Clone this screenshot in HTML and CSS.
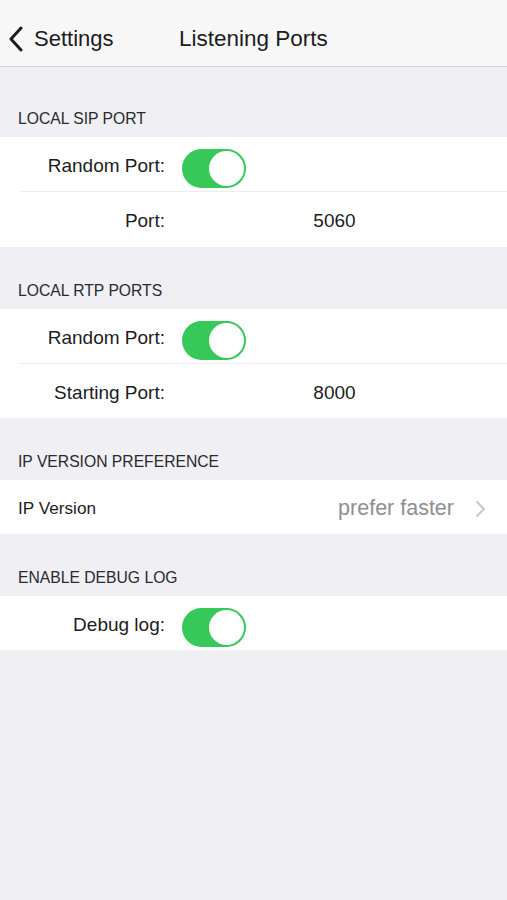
FILE: index.html
```html
<!DOCTYPE html>
<html>
<head>
<meta charset="utf-8">
<link rel="stylesheet" href="styles.css">
</head>
<body>
<header class="navbar">
  <div class="back">
    <svg class="back-icon" width="16" height="26" viewBox="0 0 16 26"><path d="M13 2 L3 13 L13 24" fill="none" stroke="#1c1c1e" stroke-width="3" stroke-linecap="round" stroke-linejoin="round"/></svg>
    <span class="back-label">Settings</span>
  </div>
  <div class="title">Listening Ports</div>
</header>

<main class="content">
  <div class="section-header first">LOCAL SIP PORT</div>
  <div class="card">
    <div class="row">
      <div class="label">Random Port:</div>
      <div class="toggle"><span class="knob"></span></div>
    </div>
    <div class="sep"></div>
    <div class="row tall">
      <div class="label">Port:</div>
      <div class="value">5060</div>
    </div>
  </div>

  <div class="section-header">LOCAL RTP PORTS</div>
  <div class="card">
    <div class="row">
      <div class="label">Random Port:</div>
      <div class="toggle"><span class="knob"></span></div>
    </div>
    <div class="sep"></div>
    <div class="row">
      <div class="label">Starting Port:</div>
      <div class="value">8000</div>
    </div>
  </div>

  <div class="section-header">IP VERSION PREFERENCE</div>
  <div class="card">
    <div class="row nav-row">
      <div class="nav-label">IP Version</div>
      <div class="nav-detail">prefer faster</div>
      <svg class="chevron" width="12" height="18" viewBox="0 0 12 18"><path d="M2 2 L9 9 L2 16" fill="none" stroke="#c7c7cc" stroke-width="2" stroke-linecap="round" stroke-linejoin="round"/></svg>
    </div>
  </div>

  <div class="section-header">ENABLE DEBUG LOG</div>
  <div class="card">
    <div class="row">
      <div class="label">Debug log:</div>
      <div class="toggle"><span class="knob"></span></div>
    </div>
  </div>
</main>
</body>
</html>
```

FILE: styles.css
```css
html, body {
  margin: 0;
  padding: 0;
}
body {
  width: 507px;
  min-height: 900px;
  background: #efeff4;
  font-family: "Liberation Sans", Arial, sans-serif;
  color: #1c1c1e;
}
.navbar {
  height: 66px;
  background: #f7f7f7;
  border-bottom: 1px solid #d4d4d6;
  display: flex;
  align-items: center;
  box-sizing: border-box;
  height: 67px;
  padding-top: 11px;
}
.back {
  display: flex;
  align-items: center;
  padding-left: 8px;
  width: 171px;
}
.back-icon {
  display: block;
  margin-right: 10px;
}
.back-label {
  font-size: 22px;
}
.title {
  font-size: 22.5px;
}
.content {
  display: flex;
  flex-direction: column;
}
.section-header {
  font-size: 15.7px;
  color: #2a2a2c;
  padding: 34px 18px 8px;
  line-height: 20px;
}
.section-header.first {
  padding-top: 42px;
}
.card {
  background: #fff;
  display: flex;
  flex-direction: column;
}
.row {
  height: 54px;
  display: flex;
  align-items: center;
  box-sizing: border-box;
  padding-top: 3px;
}
.row.tall {
  height: 55px;
}
.sep {
  height: 1px;
  background: #ececf0;
  margin-left: 20px;
}
.label {
  width: 165px;
  text-align: right;
  font-size: 19px;
  margin-right: 17px;
  flex: none;
}
.toggle {
  width: 64px;
  height: 39px;
  border-radius: 20px;
  background: #37c85a;
  box-sizing: border-box;
  padding: 2px;
  display: flex;
  justify-content: flex-end;
  margin-top: 5px;
}
.knob {
  width: 35px;
  height: 35px;
  border-radius: 50%;
  background: #fff;
  display: block;
}
.value {
  width: 305px;
  text-align: center;
  font-size: 19px;
}
.nav-row {
  padding: 3px 20px 0 18px;
}
.nav-label {
  font-size: 17.2px;
  flex: 1;
}
.nav-detail {
  font-size: 21.5px;
  color: #8e8e93;
  margin-right: 21px;
}
.chevron {
  display: block;
}
```
